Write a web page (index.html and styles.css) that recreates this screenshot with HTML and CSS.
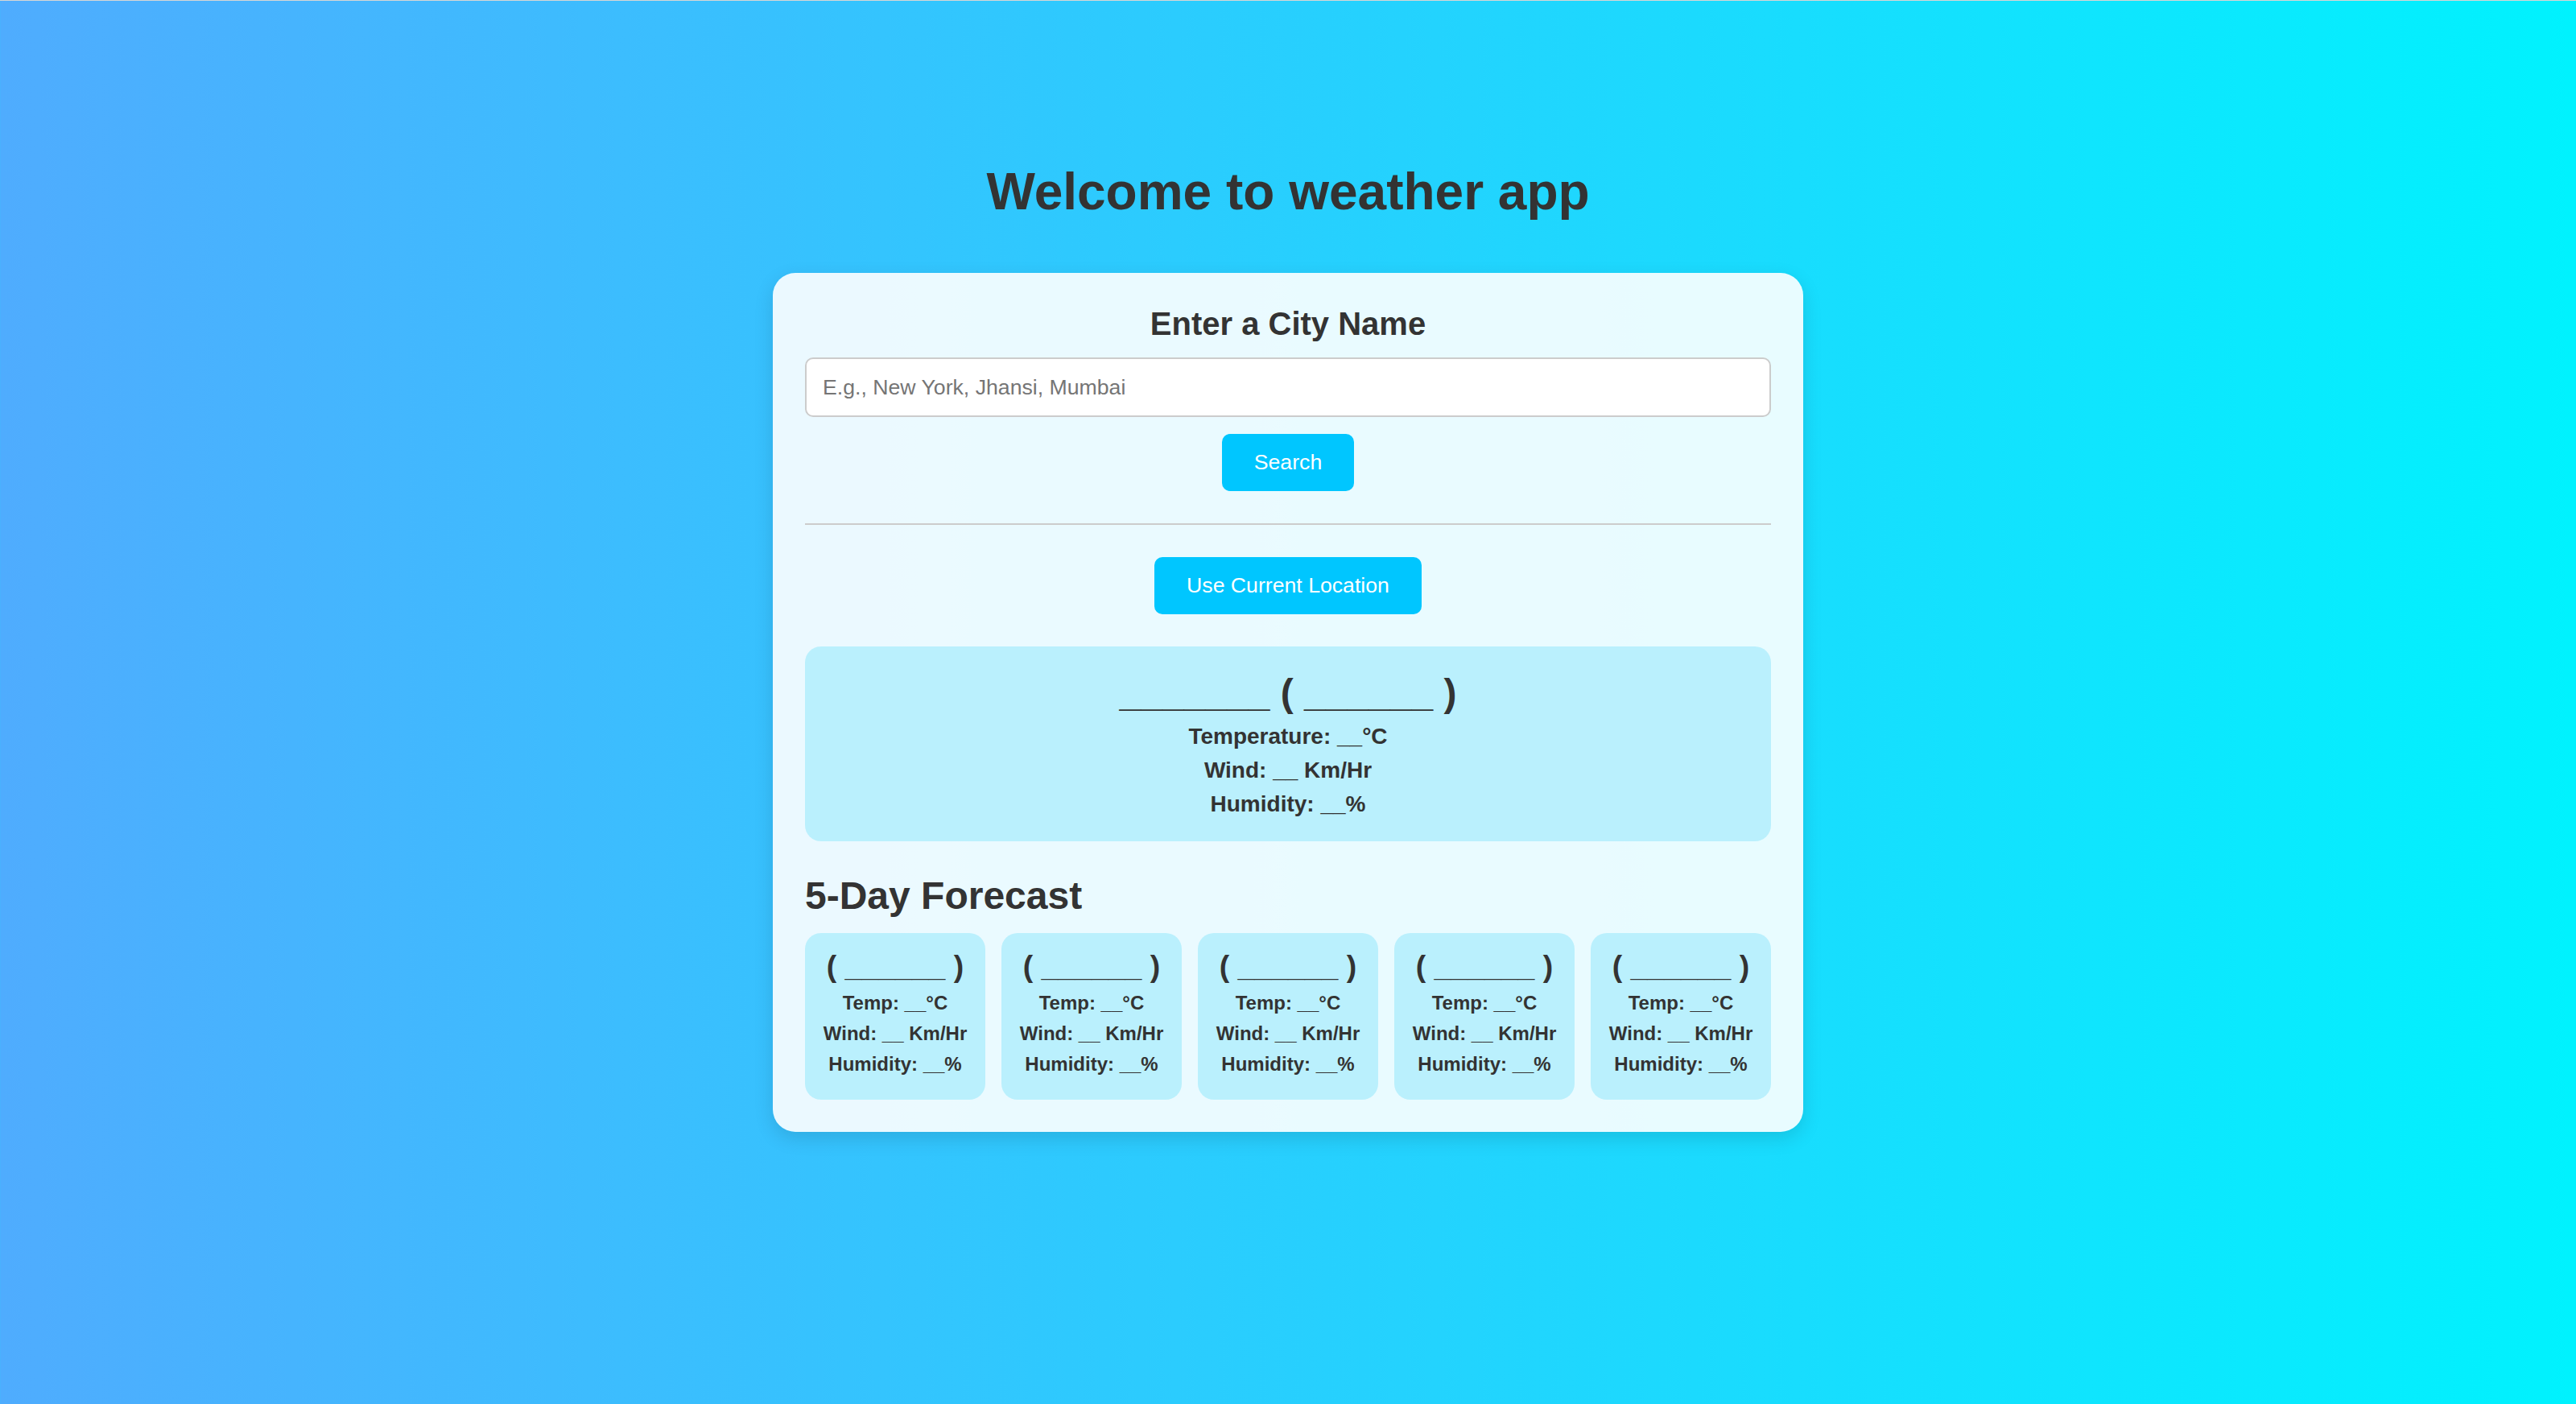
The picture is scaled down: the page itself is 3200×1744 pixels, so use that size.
FILE: index.html
```html
<!DOCTYPE html>
<html lang="en">
<head>
<meta charset="utf-8">
<title>Weather App</title>
<link rel="stylesheet" href="styles.css">
</head>
<body>
<div class="page">
  <h1 class="title">Welcome to weather app</h1>
  <main class="card">
    <h3 class="label">Enter a City Name</h3>
    <input class="city-input" type="text" placeholder="E.g., New York, Jhansi, Mumbai">
    <div class="btn-row"><button class="btn search-btn">Search</button></div>
    <div class="divider"></div>
    <div class="btn-row"><button class="btn location-btn">Use Current Location</button></div>
    <section class="current">
      <h2 class="current-title">_______ ( ______ )</h2>
      <p class="current-line">Temperature: __°C</p>
      <p class="current-line">Wind: __ Km/Hr</p>
      <p class="current-line">Humidity: __%</p>
    </section>
    <h2 class="forecast-title">5-Day Forecast</h2>
    <div class="forecast">
      <div class="day"><h3 class="day-date">( ______ )</h3><p class="day-line">Temp: __°C</p><p class="day-line">Wind: __ Km/Hr</p><p class="day-line">Humidity: __%</p></div>
      <div class="day"><h3 class="day-date">( ______ )</h3><p class="day-line">Temp: __°C</p><p class="day-line">Wind: __ Km/Hr</p><p class="day-line">Humidity: __%</p></div>
      <div class="day"><h3 class="day-date">( ______ )</h3><p class="day-line">Temp: __°C</p><p class="day-line">Wind: __ Km/Hr</p><p class="day-line">Humidity: __%</p></div>
      <div class="day"><h3 class="day-date">( ______ )</h3><p class="day-line">Temp: __°C</p><p class="day-line">Wind: __ Km/Hr</p><p class="day-line">Humidity: __%</p></div>
      <div class="day"><h3 class="day-date">( ______ )</h3><p class="day-line">Temp: __°C</p><p class="day-line">Wind: __ Km/Hr</p><p class="day-line">Humidity: __%</p></div>
    </div>
  </main>
</div>
</body>
</html>
```
FILE: styles.css
```css
* { box-sizing: border-box; }

html {
  height: 100%;
  border-top: 1px solid #d6d6d6;
}

body {
  margin: 0;
  min-height: 100%;
  font-family: "Liberation Sans", Arial, sans-serif;
  color: #333;
  background: linear-gradient(to right, #4facfe, #00f2fe);
}

.page {
  display: flex;
  flex-direction: column;
  align-items: center;
  padding-top: 200px;
  min-height: 1743px;
}

.title {
  margin: 0 0 64px;
  font-size: 64px;
  line-height: 74px;
  font-weight: bold;
  color: #333;
}

.card {
  width: 1280px;
  padding: 40px;
  background: rgba(255, 255, 255, 0.9);
  border-radius: 28px;
  box-shadow: 0 8px 24px rgba(0, 0, 0, 0.12);
}

.label {
  margin: 0 0 19px;
  text-align: center;
  font-size: 40px;
  line-height: 46px;
  font-weight: bold;
}

.city-input {
  display: block;
  width: 100%;
  height: 74px;
  padding: 0 20px;
  border: 2px solid #ccc;
  border-radius: 10px;
  background: #fff;
  font-family: "Liberation Sans", Arial, sans-serif;
  font-size: 26.67px;
  color: #333;
  outline: none;
}

.city-input::placeholder { color: #757575; }

.btn-row {
  display: flex;
  justify-content: center;
}

.btn {
  height: 71px;
  padding: 0 40px;
  border: none;
  border-radius: 10px;
  background: #00c6ff;
  color: #fff;
  font-family: "Liberation Sans", Arial, sans-serif;
  font-size: 26.67px;
  line-height: 71px;
  cursor: pointer;
}

.search-btn { margin-top: 21px; }

.divider {
  height: 2px;
  margin: 40px 0;
  background: #ccc;
}

.current {
  margin-top: 40px;
  padding: 30px 40px;
  border-radius: 20px;
  background: #baf0fd;
  text-align: center;
}

.current-title {
  margin: 0;
  font-size: 48px;
  line-height: 56px;
  font-weight: bold;
}

.current-line {
  margin: 10px 0 0;
  font-size: 28px;
  line-height: 32px;
  font-weight: bold;
}

.forecast-title {
  margin: 40px 0 18px;
  font-size: 48px;
  line-height: 56px;
  font-weight: bold;
}

.forecast {
  display: grid;
  grid-template-columns: repeat(5, 1fr);
  gap: 20px;
}

.day {
  padding: 20px 10px 30px;
  border-radius: 20px;
  background: #baf0fd;
  text-align: center;
}

.day-date {
  margin: 0;
  font-size: 37.44px;
  line-height: 43px;
  font-weight: bold;
}

.day-line {
  margin: 10px 0 0;
  font-size: 24px;
  line-height: 28px;
  font-weight: bold;
}
```
